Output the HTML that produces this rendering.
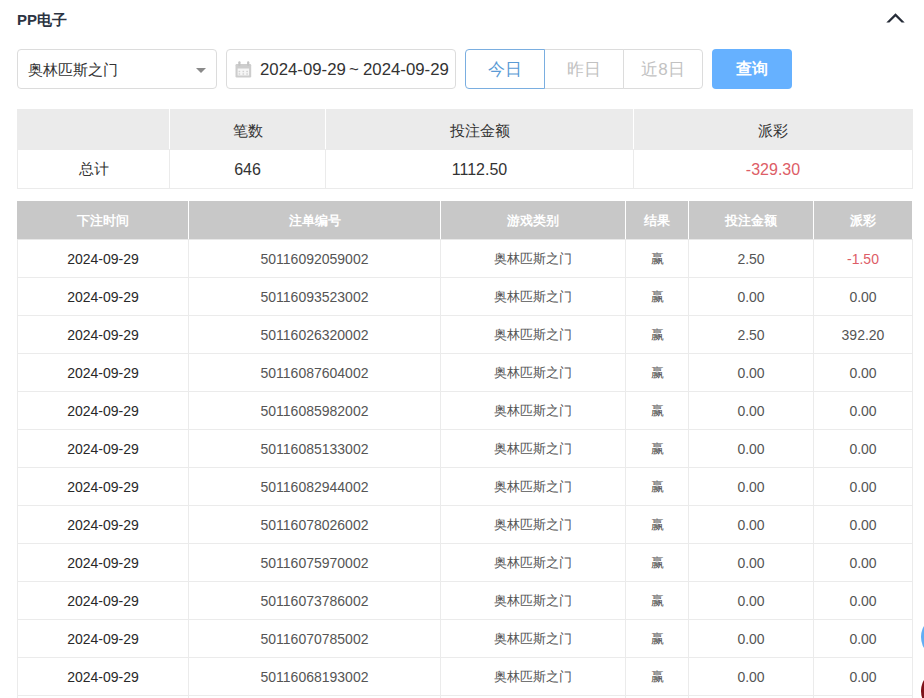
<!DOCTYPE html>
<html><head><meta charset="utf-8">
<style>
*{box-sizing:border-box;margin:0;padding:0}
html,body{width:924px;height:698px;overflow:hidden;background:#fff}
body{font-family:"Liberation Sans",sans-serif;color:#333;position:relative}
.abs{position:absolute}
.title{left:17px;top:11px;font-size:15px;font-weight:bold;color:#2c3442;line-height:18px}
.chev{left:884px;top:10px;width:24px;height:16px}
.box{border:1px solid #dcdcdc;border-radius:4px;height:40px;background:#fff}
.sel{left:17px;top:49px;width:200px}
.sel .t{position:absolute;left:10px;top:1px;line-height:38px;font-size:15px;color:#333}
.sel .arr{position:absolute;left:178px;top:18px;width:0;height:0;border-left:5px solid transparent;border-right:5px solid transparent;border-top:5px solid #8a8a8a}
.date{left:226px;top:49px;width:230px}
.date .t{position:absolute;left:33px;top:1px;line-height:38px;font-size:16.8px;color:#333;white-space:nowrap}
.cal{position:absolute;left:8px;top:11px}
.rg{top:49px;height:40px;border:1px solid #dcdcdc;background:#fff;font-size:17px;line-height:39px;text-align:center;color:#c2c2c2}
.b1{left:465px;width:80px;border-color:#7aaee0;border-radius:4px 0 0 4px;color:#5b9bd5;z-index:2}
.b2{left:544px;width:80px;border-left:none}
.b3{left:623px;width:80px;border-radius:0 4px 4px 0}
.q{left:712px;top:49px;width:80px;height:40px;border-radius:4px;background:#66b1ff;color:#fff;font-size:14px;line-height:40px;text-align:center;font-size:16px;font-weight:bold}
table{border-collapse:collapse;table-layout:fixed;position:absolute;left:17px;width:895px}
td,th{border:1px solid #ebebeb;text-align:center;font-size:14px;font-weight:normal;color:#333;padding:0}
.sum{top:109px}
.sum th{background:#ebebeb;height:40px;font-size:15px;padding-top:3px;border-color:#ebebeb #fff}
.sum th:first-child{border-left-color:#ebebeb}.sum th:last-child{border-right-color:#ebebeb}
.sum td{height:39px;font-size:15px;padding-top:1px}
.sum td:nth-child(n+2){font-size:16px}
.red{color:#dd5d67 !important}
.dat{top:201px}
.dat th{background:#c8c8c8;color:#fff;font-weight:bold;height:38px;font-size:13px;border-color:#c8c8c8 #fff #e8e8e8}
.dat th:first-child{border-left-color:#c8c8c8}
.dat td{height:38px;color:#555}
.dat td:first-child{color:#282828}
.dat td:nth-child(3),.dat td:nth-child(4){font-size:13px}
</style></head><body>
<div class="abs title">PP电子</div>
<svg class="abs chev" viewBox="0 0 24 16"><path d="M2.3 12.5 L11.5 3.2 L20.7 12.5 L17.6 12.5 L11.5 6.4 L5.4 12.5 Z" fill="#262c38"/></svg>

<div class="abs box sel"><span class="t">奥林匹斯之门</span><i class="arr"></i></div>
<div class="abs box date">
<svg class="cal" width="17" height="18" viewBox="0 0 17 18"><rect x="0.5" y="3" width="15.7" height="13.5" rx="1.2" fill="#cdcdcd"/><rect x="2.6" y="7.5" width="11.5" height="7" fill="#f6f6f6"/><rect x="3.3" y="0.3" width="2.2" height="4.6" rx="1" fill="#c4c4c4"/><rect x="12.1" y="0.3" width="2.2" height="4.6" rx="1" fill="#c4c4c4"/><g fill="#d2d2d2"><rect x="3.6" y="9.8" width="1.6" height="1.4"/><rect x="7.5" y="9.8" width="1.6" height="1.4"/><rect x="11.3" y="9.8" width="1.6" height="1.4"/><rect x="3.6" y="12.3" width="1.6" height="1.4"/><rect x="7.5" y="12.3" width="1.6" height="1.4"/><rect x="11.3" y="12.3" width="1.6" height="1.4"/></g></svg>
<span class="t" style="left:33px">2024-09-29</span><span class="t" style="left:122px">~</span><span class="t" style="left:136px">2024-09-29</span></div>

<div class="abs rg b1">今日</div>
<div class="abs rg b2">昨日</div>
<div class="abs rg b3">近8日</div>
<div class="abs q">查询</div>

<table class="sum">
<colgroup><col style="width:152px"><col style="width:156px"><col style="width:308px"><col style="width:279px"></colgroup>
<tr><th></th><th>笔数</th><th>投注金额</th><th>派彩</th></tr>
<tr><td>总计</td><td>646</td><td>1112.50</td><td class="red">-329.30</td></tr>
</table>

<table class="dat">
<colgroup><col style="width:171px"><col style="width:252px"><col style="width:185px"><col style="width:63px"><col style="width:125px"><col style="width:99px"></colgroup>
<tr><th>下注时间</th><th>注单编号</th><th>游戏类别</th><th>结果</th><th>投注金额</th><th>派彩</th></tr>
<tr><td>2024-09-29</td><td>50116092059002</td><td>奥林匹斯之门</td><td>赢</td><td>2.50</td><td class="red">-1.50</td></tr>
<tr><td>2024-09-29</td><td>50116093523002</td><td>奥林匹斯之门</td><td>赢</td><td>0.00</td><td>0.00</td></tr>
<tr><td>2024-09-29</td><td>50116026320002</td><td>奥林匹斯之门</td><td>赢</td><td>2.50</td><td>392.20</td></tr>
<tr><td>2024-09-29</td><td>50116087604002</td><td>奥林匹斯之门</td><td>赢</td><td>0.00</td><td>0.00</td></tr>
<tr><td>2024-09-29</td><td>50116085982002</td><td>奥林匹斯之门</td><td>赢</td><td>0.00</td><td>0.00</td></tr>
<tr><td>2024-09-29</td><td>50116085133002</td><td>奥林匹斯之门</td><td>赢</td><td>0.00</td><td>0.00</td></tr>
<tr><td>2024-09-29</td><td>50116082944002</td><td>奥林匹斯之门</td><td>赢</td><td>0.00</td><td>0.00</td></tr>
<tr><td>2024-09-29</td><td>50116078026002</td><td>奥林匹斯之门</td><td>赢</td><td>0.00</td><td>0.00</td></tr>
<tr><td>2024-09-29</td><td>50116075970002</td><td>奥林匹斯之门</td><td>赢</td><td>0.00</td><td>0.00</td></tr>
<tr><td>2024-09-29</td><td>50116073786002</td><td>奥林匹斯之门</td><td>赢</td><td>0.00</td><td>0.00</td></tr>
<tr><td>2024-09-29</td><td>50116070785002</td><td>奥林匹斯之门</td><td>赢</td><td>0.00</td><td>0.00</td></tr>
<tr><td>2024-09-29</td><td>50116068193002</td><td>奥林匹斯之门</td><td>赢</td><td>0.00</td><td>0.00</td></tr>
<tr><td>2024-09-29</td><td>50116068193002</td><td>奥林匹斯之门</td><td>赢</td><td>0.00</td><td>0.00</td></tr>
</table>
<div class="abs" style="left:921px;top:615px;width:44px;height:44px;border-radius:50%;background:#62aef4"></div>
<div class="abs" style="left:921px;top:669px;width:44px;height:44px;border-radius:50%;background:#7e1219"></div>
</body></html>
